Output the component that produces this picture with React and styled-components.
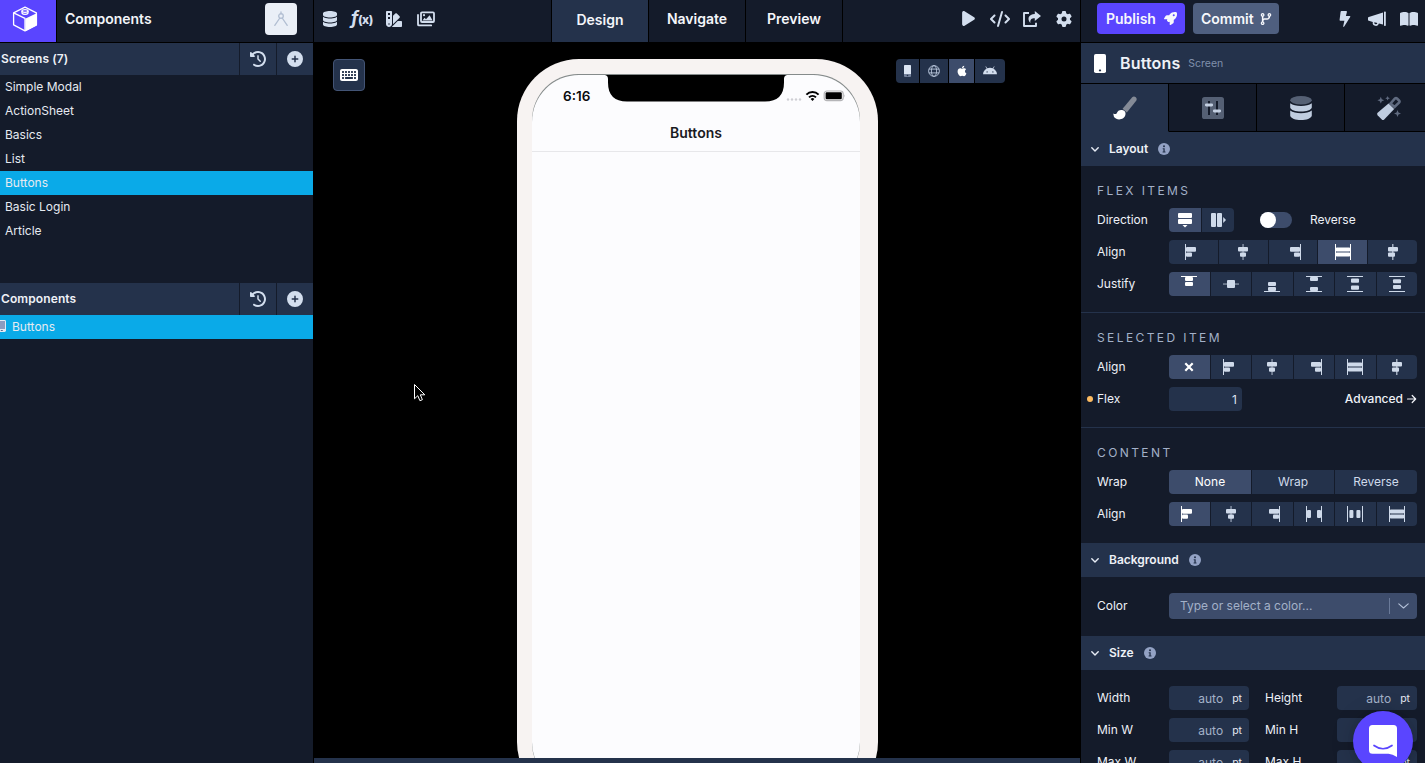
import React, { Component } from 'react';
import styled, { createGlobalStyle } from 'styled-components';
import {
  FaDatabase, FaClockRotateLeft, FaCirclePlus, FaPlay, FaCode, FaGear,
  FaRocket, FaCodeBranch, FaBookOpen, FaKeyboard, FaApple, FaSwatchbook,
} from 'react-icons/fa6';

const colors = {
  dark: '#141b2a',
  panel: '#24324b',
  active: '#3d4c6b',
  icon: '#d3deee',
  text: '#eef1f7',
  muted: '#a3b1c8',
  purple: '#5a45ff',
  blue: '#0aaae8',
};

const GlobalStyle = createGlobalStyle`
  * { box-sizing: border-box; }
  body {
    margin: 0;
    background: #000;
    font-family: Inter, "Liberation Sans", sans-serif;
    overflow: hidden;
  }
  svg { display: block; flex: none; }
`;

const Page = styled.div`
  display: grid;
  grid-template-columns: 313px 766px 344px;
  column-gap: 1px;
  height: 763px;
  overflow: hidden;
  color: ${colors.text};
  font-size: 12px;
`;

const Column = styled.div`
  display: flex;
  flex-direction: column;
  min-width: 0;
  height: 763px;
  overflow: hidden;
  background: ${props => props.$bg || colors.dark};
`;

const TopBar = styled.header`
  display: flex;
  flex: none;
  align-items: center;
  height: 43px;
  padding: 0 0 5px ${props => props.$left || 0};
  border-bottom: 1px solid #000;
  background: ${colors.dark};
  color: ${colors.icon};
`;

/* left sidebar */
const Logo = styled.div`
  display: flex;
  align-items: center;
  justify-content: center;
  width: 57px;
  height: 42px;
  margin-bottom: -5px;
  padding: 0 6px 4px 0;
  border-right: 1px solid #000;
  background: ${colors.purple};
`;

const ProjectName = styled.h1`
  flex: 1;
  margin: 0 0 0 8px;
  color: #f2f4f8;
  font-size: 14px;
  font-weight: 600;
`;

const Avatar = styled.div`
  display: flex;
  align-items: center;
  justify-content: center;
  width: 32px;
  height: 32px;
  margin-right: 16px;
  border-radius: 4px;
  background: #eaeff7;
`;

const ListHead = styled.div`
  display: flex;
  flex: none;
  height: 32px;
  margin-top: ${props => props.$top || 0};
  background: ${colors.panel};
`;

const ListTitle = styled.h2`
  flex: 1;
  margin: 0;
  padding-left: 1px;
  font-size: 12px;
  font-weight: 600;
  letter-spacing: .1px;
  line-height: 32px;
`;

const ListAction = styled.button`
  display: flex;
  align-items: center;
  justify-content: center;
  width: 37px;
  padding: 0;
  border: none;
  border-left: 1px solid ${colors.dark};
  background: none;
  color: ${colors.icon};
`;

const ListRow = styled.div`
  display: flex;
  flex: none;
  align-items: center;
  height: 24px;
  padding: 0 0 2px ${props => props.$pad || '5px'};
  background: ${props => (props.$selected ? colors.blue : 'transparent')};
  color: #e6eaf1;
  font-size: 12px;
`;

const RowText = styled.span`
  margin-left: 6px;
`;

/* middle */
const ToolGroup = styled.div`
  display: flex;
  width: ${props => props.$width};
  justify-content: ${props => props.$justify || 'flex-start'};
`;

const Tool = styled.div`
  display: flex;
  align-items: center;
  justify-content: center;
  width: 32px;
  height: 32px;
`;

const Tabs = styled.nav`
  display: flex;
  height: 42px;
  margin-bottom: -5px;
  border-left: 1px solid #000;
`;

const Tab = styled.div`
  width: 97px;
  padding-top: ${props => (props.$active ? '1px' : 0)};
  border-right: 1px solid #000;
  background: ${props => (props.$active ? colors.panel : 'transparent')};
  color: #f4f6fa;
  font-size: 14px;
  font-weight: 600;
  line-height: 38px;
  text-align: center;
`;

const Canvas = styled.main`
  display: grid;
  flex: 1;
  grid-template-columns: 203px 361px 1fr;
  min-height: 0;
  padding-top: 16px;
  overflow: hidden;
`;

const KeyButton = styled.button`
  display: flex;
  align-items: center;
  justify-content: center;
  width: 32px;
  height: 32px;
  margin-left: 19px;
  padding: 0;
  border: 1px solid #435475;
  border-radius: 4px;
  background: ${colors.panel};
  color: #fff;
`;

const Phone = styled.div`
  height: 745px;
  padding: 15px 18px 15px 15px;
  border-radius: 62px;
  background: #f7f3f2;
`;

const Well = styled.div`
  height: 100%;
  padding-top: 1px;
  border-radius: 46px;
  background: #858b8b;
`;

const Screen = styled.div`
  height: 100%;
  border-radius: 47px;
  background: #fcfcfe;
  color: #0b0b0d;
`;

const StatusBar = styled.div`
  display: flex;
  height: 37px;
`;

const Clock = styled.div`
  width: 73px;
  padding-left: 31px;
  font-size: 13.5px;
  font-weight: 600;
  line-height: 42px;
  white-space: nowrap;
`;

const Signals = styled.div`
  display: flex;
  align-items: center;
  height: 41px;
  margin-left: -1px;
`;

const NavTitle = styled.div`
  height: 40px;
  border-bottom: 1px solid #e7e7ea;
  color: #1a1a1f;
  font-size: 14px;
  font-weight: 600;
  line-height: 41px;
  text-align: center;
`;

const Devices = styled.div`
  display: flex;
  gap: 1px;
  height: 24px;
  margin-left: 18px;
`;

const Device = styled.div`
  display: flex;
  align-items: center;
  justify-content: center;
  width: ${props => props.$width};
  background: ${props => (props.$active ? colors.active : colors.panel)};
  color: ${props => (props.$active ? '#fff' : colors.icon)};
  &:first-child { border-radius: 4px 0 0 4px; }
  &:last-child { border-radius: 0 4px 4px 0; }
`;

const BottomBar = styled.div`
  flex: none;
  height: 5px;
  background: ${colors.panel};
`;

/* right panel */
const BarButton = styled.button`
  display: flex;
  flex: none;
  align-items: center;
  justify-content: space-between;
  width: ${props => props.$width};
  height: 31px;
  margin-right: 8px;
  padding: 0 ${props => props.$right || '8px'} 0 ${props => props.$left || '8px'};
  border: none;
  border-radius: 4px;
  background: ${props => props.$bg};
  color: #f7f8fc;
  font-family: inherit;
  font-size: 14px;
  font-weight: 600;
`;

const Inspected = styled.div`
  display: flex;
  flex: none;
  align-items: center;
  height: 41px;
  padding-left: 13px;
  border-bottom: 1px solid #000;
  background: ${colors.panel};
  font-size: 16px;
  font-weight: 600;
`;

const InspectedName = styled.span`
  margin: 0 8px 0 14px;
  letter-spacing: .15px;
`;

const Kind = styled.span`
  color: #8090ab;
  font-size: 10.5px;
  font-weight: 400;
`;

const PanelTabs = styled.div`
  display: flex;
  flex: none;
  height: 48px;
  background: ${colors.panel};
`;

const PanelTab = styled.div`
  display: flex;
  flex: none;
  align-items: center;
  justify-content: center;
  width: 88px;
  border-right: 1px solid #000;
  border-bottom: 1px solid ${props => (props.$active ? colors.panel : '#000')};
  background: ${props => (props.$active ? colors.panel : colors.dark)};
`;

const SectionHead = styled.div`
  display: flex;
  flex: none;
  align-items: center;
  height: 34px;
  padding-left: 10px;
  background: ${colors.panel};
  font-size: 12px;
  font-weight: 600;
`;

const SectionName = styled.span`
  margin: 0 10px;
  padding-bottom: 1px;
`;

const Group = styled.section`
  display: flex;
  flex: none;
  flex-direction: column;
  gap: 8px;
  padding: ${props => props.$pad};
  border-bottom: ${props => (props.$line ? `1px solid ${colors.panel}` : 'none')};
`;

const GroupTitle = styled.h3`
  height: 18px;
  margin: 0;
  color: ${colors.muted};
  font-size: 12px;
  font-weight: 400;
  letter-spacing: 2.4px;
  line-height: 18px;
`;

const Field = styled.div`
  display: flex;
  align-items: center;
  height: ${props => props.$height || '24px'};
`;

const Label = styled.label`
  width: 72px;
  margin-left: ${props => props.$gap || 0};
  padding-bottom: 1px;
  font-size: 12px;
`;

const ChangedLabel = styled(Label)`
  display: flex;
  align-items: center;
  gap: 4px;
  width: 82px;
  margin-left: -10px;
  &:before {
    content: '';
    width: 6px;
    height: 6px;
    border-radius: 50%;
    background: #fdbb61;
  }
`;

const Segments = styled.div`
  display: flex;
  gap: 1px;
  width: ${props => props.$width || '248px'};
  height: 24px;
  border-radius: 4px;
  overflow: hidden;
`;

const Segment = styled.div`
  display: flex;
  flex: 1 1 0;
  align-items: center;
  justify-content: center;
  padding-bottom: ${props => (props.$text ? '1px' : 0)};
  background: ${props => (props.$active ? colors.active : colors.panel)};
  color: ${props => (props.$active ? '#fff' : '#cfdaea')};
  font-size: 12px;
`;

const Switch = styled.div`
  width: 32px;
  height: 16px;
  margin: 0 18px 0 26px;
  border-radius: 8px;
  background: ${colors.active};
  &:before {
    content: '';
    display: block;
    width: 16px;
    height: 16px;
    border-radius: 50%;
    background: #fff;
  }
`;

const NumberBox = styled.div`
  display: flex;
  align-items: center;
  justify-content: flex-end;
  width: ${props => props.$width || '80px'};
  height: 24px;
  padding: 1px ${props => props.$right || '7px'} 0 0;
  border-radius: 4px;
  background: ${colors.panel};
  color: ${props => props.$color || colors.muted};
  font-size: 12px;
`;

const Unit = styled.span`
  margin: -1px 0 0 9px;
  color: #e3e8f1;
  font-size: 10.5px;
`;

const Advanced = styled.div`
  display: flex;
  align-items: center;
  gap: 3px;
  margin-left: auto;
  padding-bottom: 1px;
  font-size: 12px;
  font-weight: 500;
`;

const ColorSelect = styled.div`
  display: flex;
  align-items: center;
  width: 248px;
  height: 26px;
  padding: 0 0 1px 11px;
  border-radius: 4px;
  background: ${colors.active};
  color: ${colors.muted};
  font-size: 12px;
`;

const ColorArrow = styled.div`
  display: flex;
  align-items: center;
  justify-content: center;
  width: 28px;
  height: 16px;
  margin-left: auto;
  border-left: 1px solid #6a7a99;
`;

/* floats over the panel */
const Chat = styled.div`
  position: absolute;
  left: 1353px;
  top: 711px;
  display: flex;
  align-items: center;
  justify-content: center;
  width: 60px;
  height: 60px;
  border-radius: 50%;
  background: ${colors.purple};
  box-shadow: 0 1px 6px rgba(0, 0, 0, .1), 0 2px 24px rgba(0, 0, 0, .16);
`;

const Pointer = styled.svg`
  position: absolute;
  left: 413px;
  top: 383px;
`;

const Cube = () => (
  <svg width="26" height="26" viewBox="0 0 26 26" fill="none" stroke="#fff" strokeWidth="1.3" strokeLinejoin="round">
    <path d="M13 1.2 24.4 6.8v12L13 24.8 1.6 18.8v-12z" />
    <path d="M1.6 6.8 13 12.4v12.4" />
    <path d="M14 13.2 24.4 8v10.8L14 24.2z" fill="#fff" />
    <path d="M10 5v2.200c1 1.700 5 1.700 6 0V5" />
    <ellipse cx="13" cy="5" rx="3" ry="1.300" fill={colors.purple} />
  </svg>
);

const Compass = () => (
  <svg width="16" height="16" viewBox="0 0 16 16" fill="none" stroke="#b1bed2" strokeWidth="1.300" strokeLinecap="round">
    <path d="M8 1v2M6.800 7 1.800 14.400M9.200 7l5 7.400" />
    <circle cx="8" cy="5" r="2.300" />
  </svg>
);

const FormulaText = styled.span`
  display: flex;
  align-items: baseline;
  color: ${colors.icon};
  font-size: 18px;
  font-style: italic;
  font-weight: 700;
  line-height: 18px;
  white-space: nowrap;
  small {
    margin-left: -.5px;
    font-size: 12px;
    font-style: normal;
    font-weight: 800;
    letter-spacing: -.4px;
  }
`;

const Images = () => (
  <svg width="18" height="16" viewBox="0 0 18 16" fill="none" stroke={colors.icon} strokeWidth="1.800" strokeLinejoin="round">
    <rect x="4" y="1.400" width="13" height="9.600" rx="1" />
    <path d="M1 4v9.400q0 1 1 1h12.200" strokeLinecap="round" />
    <path d="m5.400 9.400 2.200-2.600 1.400 1.400 3.600-4 3 5.200z" fill={colors.icon} stroke="none" />
    <circle cx="7" cy="4.200" r="1.100" fill={colors.icon} stroke="none" />
  </svg>
);

const Share = () => (
  <svg width="18" height="16" viewBox="0 0 18 16" fill="none" stroke={colors.icon} strokeWidth="1.900" strokeLinejoin="round">
    <path d="M6 2H1v13h12v-3.200" />
    <path d="M11.800 0 18 5l-6.200 5V7.300C8.400 7.300 7 8.400 7.400 12 3.800 8 5.400 3.200 11.800 3z" fill={colors.icon} stroke="none" />
  </svg>
);

const Bolt = () => (
  <svg width="12" height="16" viewBox="0 0 12 16" fill={colors.icon}>
    <path d="M2.400 0h4.800q.9.100.7.900L6.900 4.900h3.700q1.100.2.600 1.200L5.200 15.600q-1 .8-1-.4L5.400 9.800H1.300q-.9-.2-.7-1.100L1.600.7Q1.800 0 2.400 0z" />
  </svg>
);

const Megaphone = () => (
  <svg width="18" height="16" viewBox="0 0 18 16" fill={colors.icon}>
    <path d="M0 7c0-.6.300-.9.800-1L15 1.600v12L10.900 12.400A3.100 3.100 0 0 1 4.800 11L.8 9.800C.3 9.700 0 9.400 0 9z" />
    <path d="M6.300 11.200a1.600 1.600 0 0 0 3.100.9z" fill={colors.dark} />
    <rect x="16" y=".6" width="1.800" height="14.400" rx=".7" />
  </svg>
);

const MobileIcon = () => (
  <svg width="12" height="19" viewBox="0 0 12 19">
    <rect width="12" height="19" rx="1.800" fill="#fff" />
    <rect x="4.900" y="15.600" width="2.200" height="1.700" rx=".6" fill={colors.panel} />
  </svg>
);

const SmallMobile = () => (
  <svg width="7" height="12" viewBox="0 0 7 12">
    <rect width="7" height="12" rx="1" fill="#74829c" />
    <path d="M1 0h5q1 0 1 1v8H0V1q0-1 1-1z" fill="#dbe5f3" />
    <circle cx="3.500" cy="10.500" r=".8" fill="#24324b" />
  </svg>
);

const Globe = () => (
  <svg width="12" height="12" viewBox="0 0 12 12" fill="none" stroke="#b9c6db" strokeWidth=".9">
    <circle cx="6" cy="6" r="5.400" />
    <ellipse cx="6" cy="6" rx="2.600" ry="5.400" />
    <path d="M.9 4.100h10.200M.9 7.900h10.200" />
  </svg>
);

const AndroidHead = () => (
  <svg width="14" height="10" viewBox="0 0 15 10">
    <path d="M0 8.600A7.500 7.100 0 0 1 15 8.600z" fill={colors.icon} />
    <path d="M3.200.5 4.600 3M11.800.5 10.400 3" stroke={colors.icon} strokeWidth=".8" strokeLinecap="round" />
    <circle cx="4.400" cy="6" r=".7" fill={colors.panel} />
    <circle cx="10.600" cy="6" r=".7" fill={colors.panel} />
  </svg>
);

const ScreenIcon = () => (
  <svg width="6" height="12" viewBox="0 0 6 12">
    <path d="M0 0h4.600Q6 0 6 1.400v9.200Q6 12 4.600 12H0z" fill="#e3eaf4" />
    <path d="M0 1h5v8H0z" fill="#8c9cc0" />
    <rect x=".8" y="10" width="2" height="1" fill="#5a6b90" />
  </svg>
);

const Notch = () => (
  <svg width="182" height="27" viewBox="0 0 182 27">
    <path d="M0 0h182q-3 .4-3 4v3.500q0 19-19 19H22q-19 0-19-19V4Q3 .4 0 0z" />
  </svg>
);

const StatusIcons = () => (
  <svg width="60" height="14" viewBox="0 0 60 14" fill="none">
    <g fill="#cfcfd4">
      <circle cx="2" cy="10.500" r="1.200" />
      <circle cx="6" cy="10.500" r="1.200" />
      <circle cx="10" cy="10.500" r="1.200" />
      <circle cx="14" cy="10.500" r="1.200" />
    </g>
    <g stroke="#000" strokeWidth="2">
      <path d="M20.400 5.600a8.600 8.600 0 0 1 12.200 0" />
      <path d="M23 8.400a5 5 0 0 1 7 0" />
    </g>
    <path d="m26.500 12 -1.900-2a2.800 2.800 0 0 1 3.800 0z" fill="#000" />
    <rect x="38.200" y="2" width="19" height="9.600" rx="2.800" stroke="#b5b5b8" strokeWidth="1.200" />
    <rect x="39.600" y="3.300" width="16.200" height="7" rx="1.200" fill="#000" />
    <path d="M58.300 5.200q1.300 1.600 0 3.200z" fill="#b5b5b8" />
  </svg>
);

const Chevron = ({ width = 8, height = 5, color = '#e8edf6', weight = 1.4 }) => (
  <svg width={width} height={height} viewBox={`0 0 ${width} ${height}`} fill="none" stroke={color} strokeWidth={weight} strokeLinecap="round" strokeLinejoin="round">
    <path d={`M.8.8 ${width / 2} ${height - 1} ${width - .8} .8`} />
  </svg>
);

const Info = () => (
  <svg width="12" height="12" viewBox="0 0 12 12">
    <circle cx="6" cy="6" r="6" fill="#93a2c4" />
    <circle cx="6" cy="3.300" r="1" fill={colors.panel} />
    <path d="M4.700 5.200h2v3.300h.8v1H4.600v-1h.8V6.200h-.7z" fill={colors.panel} />
  </svg>
);

const Brush = () => (
  <svg width="24" height="24" viewBox="0 0 24 24">
    <path d="M9.600 12.800 19.200 1.300q1.700-1.700 3.600 0 1.600 1.600.4 3.500L13.800 16.400z" fill="#848a96" />
    <path d="M9.200 14q4 .8 3.200 4.800c-.8 4.600-8 6.600-11.400 2.200L.2 17.400q2.200 1.400 3.400 0 1.600-4 5.600-3.400z" fill="#fff" />
  </svg>
);

const Sliders = () => (
  <svg width="22" height="22" viewBox="0 0 22 22">
    <rect width="22" height="22" rx="2.600" fill="#556074" />
    <path d="M7 4v14M15 4v14" stroke={colors.dark} strokeWidth="2" />
    <path d="M4.300 8h5.400M12.300 14h5.400" stroke="#c3cfe1" strokeWidth="2.800" strokeLinecap="round" />
  </svg>
);

const DuoDatabase = () => (
  <svg width="22" height="24" viewBox="0 0 22 24">
    <ellipse cx="11" cy="4.300" rx="10.800" ry="4.200" fill="#556074" />
    <path d="M.2 7.300Q4 10 11 10t10.800-2.700v4.200C21 14 16.500 15.600 11 15.600S1 14 .2 11.500z" fill="#c0cde0" />
    <path d="M.2 14.500Q4 17.200 11 17.200t10.800-2.700v5.200C21 22.400 16.500 24 11 24S1 22.400.2 19.700z" fill="#c0cde0" />
  </svg>
);

const Wand = () => (
  <svg width="24" height="24" viewBox="0 0 24 24">
    <path d="m13.500 7.500 4.500-5q1-.9 2 0L22 4.500q1 1 0 2.200L17.500 11z" fill="none" stroke="#606b80" strokeWidth="2.600" />
    <path d="m11.500 7.400 5.700 5.700L7.200 23.400q-1.200 1-2.400 0L.6 19.200q-1-1.200 0-2.400z" fill="#c0cde0" />
    <path d="m3.800.8 1 2.400 2.400 1-2.400 1-1 2.400-1-2.400-2.400-1 2.400-1zM10.600 0l.7 1.600 1.600.7-1.600.7-.7 1.600-.7-1.600-1.600-.7 1.600-.7zM20.500 14l1 2.500 2.500 1-2.500 1-1 2.500-1-2.500-2.500-1 2.500-1z" fill="#606b80" />
  </svg>
);

// [x, y, width, height, opacity]
const glyphs = {
  left: [[0, 0, 1, 16], [1, 3, 10, 4.7], [1, 8.6, 6, 4.2]],
  center: [[7.3, 0, 1.5, 16, .55], [3, 3, 10, 4.5], [5, 8.5, 6, 4.2]],
  right: [[15, 0, 1, 16], [5, 3, 10, 4.7], [9, 8.6, 6, 4.2]],
  stretch: [[0, 0, 1, 16], [15, 0, 1, 16], [1, 4, 14, 3], [1, 3, 14, 5, .5], [1, 9, 14, 3], [1, 8, 14, 5, .5]],
  baseline: [[7.2, 0, 1.2, 16, .9], [3, 3, 10, 4.5], [3, 8.5, 7, 4.2]],
  top: [[0, 0, 16, 1], [4, 1, 8, 4], [4, 6, 8, 4]],
  middle: [[0, 7.4, 16, 1.3, .6], [4, 4, 8, 8]],
  bottom: [[0, 15, 16, 1], [4, 6, 8, 4], [4, 11, 8, 4]],
  between: [[0, 0, 16, 1], [0, 15, 16, 1], [4, 1, 8, 4], [4, 11, 8, 4]],
  around: [[0, 0, 16, 1], [0, 15, 16, 1], [4, 2.5, 8, 4.2], [4, 9.5, 8, 4.2]],
  evenly: [[0, 0, 16, 1], [0, 15, 16, 1], [4, 3.2, 8, 4], [4, 9, 8, 4]],
  betweenX: [[0, 0, 1, 16], [15, 0, 1, 16], [1, 4, 4, 8], [11, 4, 4, 8]],
  aroundX: [[0, 0, 1, 16], [15, 0, 1, 16], [2.4, 4, 4, 8], [9.4, 4, 4, 8]],
};

const Glyph = ({ name }) => (
  <svg width="16" height="16" viewBox="0 0 16 16" fill="currentColor">
    {glyphs[name].map(([x, y, width, height, opacity = 1], i) => (
      <rect key={i} x={x} y={y} width={width} height={height} rx={Math.min(width, height) > 3 ? 1 : 0} opacity={opacity} />
    ))}
  </svg>
);

const ColumnGlyph = () => (
  <svg width="14" height="16" viewBox="0 0 14 16" fill="currentColor">
    <rect y="1" width="14" height="5" rx="1" />
    <rect y="7" width="14" height="5" rx="1" />
    <path d="M4.500 13h5L7 15.400z" />
  </svg>
);

const RowGlyph = () => (
  <svg width="15" height="14" viewBox="0 0 15 14" fill="currentColor">
    <rect width="5" height="14" rx="1" />
    <rect x="6" width="5" height="14" rx="1" />
    <path d="M12.200 4v6L15 7z" />
  </svg>
);

const Cross = () => (
  <svg width="10" height="10" viewBox="0 0 10 10" stroke="#fff" strokeWidth="2.200">
    <path d="m1.300 1.300 7.400 7.400M8.700 1.300 1.300 8.700" />
  </svg>
);

const Arrow = () => (
  <svg width="11" height="10" viewBox="0 0 11 10" fill="none" stroke="#f2f4f9" strokeWidth="1.200" strokeLinecap="round" strokeLinejoin="round">
    <path d="M1.500 5h8M6.200 1.500 9.700 5 6.200 8.500" />
  </svg>
);

const GlyphSegments = ({ names, active }) => (
  <Segments>
    {names.map((name, i) => (
      <Segment key={i} $active={i === active}>
        {name === 'none' ? <Cross /> : <Glyph name={name} />}
      </Segment>
    ))}
  </Segments>
);

const ListHeader = ({ title, top }) => (
  <ListHead $top={top}>
    <ListTitle>{title}</ListTitle>
    <ListAction><FaClockRotateLeft size={16} /></ListAction>
    <ListAction><FaCirclePlus size={16} /></ListAction>
  </ListHead>
);

const SectionHeader = ({ name }) => (
  <SectionHead>
    <Chevron />
    <SectionName>{name}</SectionName>
    <Info />
  </SectionHead>
);

const SizeRow = ({ first, second }) => (
  <Field>
    <Label>{first}</Label>
    <NumberBox>auto<Unit>pt</Unit></NumberBox>
    <Label $gap="16px">{second}</Label>
    <NumberBox>auto<Unit>pt</Unit></NumberBox>
  </Field>
);

const screens = ['Simple Modal', 'ActionSheet', 'Basics', 'List', 'Buttons', 'Basic Login', 'Article'];

class App extends Component {
  state = {
    screen: 'Buttons',
    tab: 'Design',
  };

  render() {
    return (
      <Page>
        <GlobalStyle />
        <Column>
          <TopBar>
            <Logo><Cube /></Logo>
            <ProjectName>Components</ProjectName>
            <Avatar><Compass /></Avatar>
          </TopBar>
          <ListHeader title="Screens (7)" />
          {screens.map(el => (
            <ListRow key={el} $selected={el === this.state.screen} onClick={() => this.setState({ screen: el })}>{el}</ListRow>
          ))}
          <ListHeader title="Components" top="40px" />
          <ListRow $selected $pad="0"><ScreenIcon /><RowText>Buttons</RowText></ListRow>
        </Column>

        <Column $bg="#000">
          <TopBar>
            <ToolGroup $width="237px">
              <Tool><FaDatabase size={16} /></Tool>
              <Tool><FormulaText>f<small>(x)</small></FormulaText></Tool>
              <Tool><FaSwatchbook size={16} /></Tool>
              <Tool><Images /></Tool>
            </ToolGroup>
            <Tabs>
              {['Design', 'Navigate', 'Preview'].map(el => (
                <Tab key={el} $active={el === this.state.tab} onClick={() => this.setState({ tab: el })}>{el}</Tab>
              ))}
            </Tabs>
            <ToolGroup $width="237px" $justify="flex-end">
              <Tool><FaPlay size={17} /></Tool>
              <Tool><FaCode size={20} /></Tool>
              <Tool><Share /></Tool>
              <Tool><FaGear size={16} /></Tool>
            </ToolGroup>
          </TopBar>
          <Canvas>
            <KeyButton><FaKeyboard size={18} /></KeyButton>
            <Phone>
              <Well>
                <Screen>
                  <StatusBar>
                    <Clock>6:16</Clock>
                    <Notch />
                    <Signals><StatusIcons /></Signals>
                  </StatusBar>
                  <NavTitle>Buttons</NavTitle>
                </Screen>
              </Well>
            </Phone>
            <Devices>
              <Device $width="23px"><SmallMobile /></Device>
              <Device $width="28px"><Globe /></Device>
              <Device $width="25px" $active><FaApple size={12} /></Device>
              <Device $width="30px"><AndroidHead /></Device>
            </Devices>
          </Canvas>
          <BottomBar />
        </Column>

        <Column>
          <TopBar $left="16px">
            <BarButton $width="88px" $left="9px" $bg={colors.purple}>Publish<FaRocket size={13} /></BarButton>
            <BarButton $width="86px" $right="7px" $bg="#4f5f7f">Commit<FaCodeBranch size={12} /></BarButton>
            <ToolGroup $width="138px" $justify="flex-end">
              <Tool><Bolt /></Tool>
              <Tool><Megaphone /></Tool>
              <Tool><FaBookOpen size={18} /></Tool>
            </ToolGroup>
          </TopBar>
          <Inspected>
            <MobileIcon />
            <InspectedName>Buttons</InspectedName>
            <Kind>Screen</Kind>
          </Inspected>
          <PanelTabs>
            <PanelTab $active><Brush /></PanelTab>
            <PanelTab><Sliders /></PanelTab>
            <PanelTab><DuoDatabase /></PanelTab>
            <PanelTab><Wand /></PanelTab>
          </PanelTabs>

          <SectionHeader name="Layout" />
          <Group $line $pad="16px 8px 16px 16px">
            <GroupTitle>FLEX ITEMS</GroupTitle>
            <Field>
              <Label>Direction</Label>
              <Segments $width="65px">
                <Segment $active><ColumnGlyph /></Segment>
                <Segment><RowGlyph /></Segment>
              </Segments>
              <Switch />
              <Label>Reverse</Label>
            </Field>
            <Field>
              <Label>Align</Label>
              <GlyphSegments names={['left', 'center', 'right', 'stretch', 'baseline']} active={3} />
            </Field>
            <Field>
              <Label>Justify</Label>
              <GlyphSegments names={['top', 'middle', 'bottom', 'between', 'around', 'evenly']} active={0} />
            </Field>
          </Group>
          <Group $line $pad="16px 8px 16px 16px">
            <GroupTitle>SELECTED ITEM</GroupTitle>
            <Field>
              <Label>Align</Label>
              <GlyphSegments names={['none', 'left', 'center', 'right', 'stretch', 'baseline']} active={0} />
            </Field>
            <Field>
              <ChangedLabel>Flex</ChangedLabel>
              <NumberBox $width="73px" $right="5px" $color="#dde4ef">1</NumberBox>
              <Advanced>Advanced<Arrow /></Advanced>
            </Field>
          </Group>
          <Group $pad="16px 8px 17px 16px">
            <GroupTitle>CONTENT</GroupTitle>
            <Field>
              <Label>Wrap</Label>
              <Segments>
                <Segment $text $active>None</Segment>
                <Segment $text>Wrap</Segment>
                <Segment $text>Reverse</Segment>
              </Segments>
            </Field>
            <Field>
              <Label>Align</Label>
              <GlyphSegments names={['left', 'center', 'right', 'betweenX', 'aroundX', 'stretch']} active={0} />
            </Field>
          </Group>

          <SectionHeader name="Background" />
          <Group $pad="16px 8px 17px 16px">
            <Field $height="26px">
              <Label>Color</Label>
              <ColorSelect>
                Type or select a color...
                <ColorArrow><Chevron width={11} height={6} color="#b4c1d8" weight={1.1} /></ColorArrow>
              </ColorSelect>
            </Field>
          </Group>

          <SectionHeader name="Size" />
          <Group $pad="16px 8px 0 16px">
            <SizeRow first="Width" second="Height" />
            <SizeRow first="Min W" second="Min H" />
            <SizeRow first="Max W" second="Max H" />
          </Group>
        </Column>

        <Pointer width="13" height="20" viewBox="0 0 13 20">
          <path d="M1.500 1.500v14.300l3.300-3.100 2.100 5 2.500-1-2.100-4.900h4.500z" fill="#000" stroke="#fff" strokeWidth="1" />
        </Pointer>
        <Chat>
          <svg width="28" height="32" viewBox="0 0 28 32">
            <path d="M3.500 0h21Q28 0 28 3.500V32q-4.500-2.800-8.500-3.200h-16Q0 28.800 0 25.300V3.500Q0 0 3.500 0z" fill="#fff" />
            <path d="M5 20.500q9 6.500 18 0" fill="none" stroke={colors.purple} strokeWidth="1.700" strokeLinecap="round" />
          </svg>
        </Chat>
      </Page>
    );
  }
}

export default App;
